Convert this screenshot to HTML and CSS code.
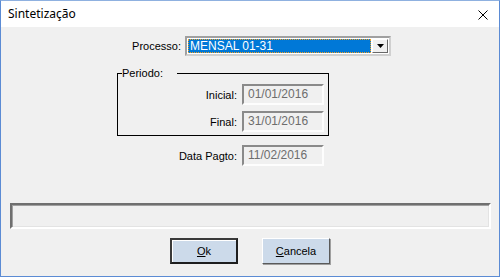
FILE: index.html
```html
<!DOCTYPE html>
<html>
    <head>
        <meta charset="utf-8">
        <title>Sintetização</title>
        <link rel="stylesheet" href="styles.css">
    </head>
    <body>
        <div class="window">
            <div class="titlebar">
                <span class="title">Sintetização</span>
                <svg class="close" width="10" height="10" viewBox="0 0 10 10">
                    <path d="M0.5 0.5 L9.5 9.5 M9.5 0.5 L0.5 9.5" stroke="#000" stroke-width="1" fill="none"/>
                </svg>
            </div>
            <div class="client">
                <div class="row processo">
                    <span class="label lbl-processo">Processo:</span>
                    <div class="combo">
                        <div class="combo-value"><span>MENSAL 01-31</span></div>
                        <div class="combo-btn">
                            <svg width="7" height="4" viewBox="0 0 7 4"><path d="M0 0 H7 L3.5 4 Z" fill="#000"/></svg>
                        </div>
                    </div>
                </div>
                <div class="group">
                    <span class="legend">Periodo:</span>
                    <div class="row">
                        <span class="label lbl-group">Inicial:</span>
                        <div class="field">01/01/2016</div>
                    </div>
                    <div class="row row-final">
                        <span class="label lbl-group">Final:</span>
                        <div class="field">31/01/2016</div>
                    </div>
                </div>
                <div class="row pagto">
                    <span class="label lbl-pagto">Data Pagto:</span>
                    <div class="field">11/02/2016</div>
                </div>
                <div class="status"></div>
                <div class="buttons">
                    <button class="btn btn-default"><u>O</u>k</button>
                    <button class="btn"><u>C</u>ancela</button>
                </div>
            </div>
        </div>
    </body>
</html>
```

FILE: styles.css
```css
html, body {
    margin: 0;
    padding: 0;
    overflow: hidden;
}
body {
    font-family: "Liberation Sans", Arial, sans-serif;
    font-size: 11px;
    color: #000;
}
.window {
    width: 500px;
    height: 277px;
    box-sizing: border-box;
    border: 1px solid #5b8bd4;
    border-top-color: #8fb1e0;
    background: #f0f0f0;
    display: flex;
    flex-direction: column;
}
.titlebar {
    height: 26px;
    background: #fff;
    display: flex;
    align-items: center;
    justify-content: space-between;
    padding: 0 11px 0 7px;
}
.title {
    font-family: "Noto Sans", "Open Sans", sans-serif;
    font-size: 12px;
    margin-top: -1px;
}
.close {
    display: block;
    margin-top: 1px;
}
.client {
    flex: 1;
    display: flex;
    flex-direction: column;
}
.row {
    display: flex;
    align-items: center;
}
.label {
    text-align: right;
    flex: none;
}
.processo {
    margin-top: 9px;
}
.lbl-processo {
    width: 180px;
    margin-right: 4px;
}
.combo {
    width: 206px;
    height: 20px;
    box-sizing: border-box;
    border: 2px solid #a0a0a0;
    border-right-color: #d0d0d0;
    border-bottom-color: #d0d0d0;
    background: #fff;
    display: flex;
    padding: 1px;
}
.combo-value {
    flex: 1;
    background: #0078d7;
    border: 1px dotted #f4a020;
    box-sizing: border-box;
    display: flex;
    align-items: center;
    padding-left: 1px;
    font-size: 12px;
    color: #fff;
}
.combo-btn {
    width: 16px;
    margin-left: 1px;
    box-sizing: border-box;
    background: #f0f0f0;
    border: 1px solid #fff;
    border-right-color: #696969;
    border-bottom-color: #696969;
    display: flex;
    align-items: center;
    justify-content: center;
}
.combo-btn svg {
    display: block;
}
.group {
    position: relative;
    margin: 17px 0 0 116px;
    width: 212px;
    height: 63px;
    box-sizing: border-box;
    border: 1px solid #000;
    padding-top: 10px;
}
.legend {
    position: absolute;
    left: 4px;
    top: -7px;
    background: #f0f0f0;
    padding: 0 14px 0 0;
    line-height: 13px;
}
.lbl-group {
    width: 119px;
    margin-right: 5px;
}
.row-final {
    margin-top: 6px;
}
.field {
    width: 82px;
    height: 21px;
    box-sizing: border-box;
    border: 2px solid #a0a0a0;
    border-top-color: #8a8a8a;
    border-left-color: #8a8a8a;
    border-right-color: #fdfdfd;
    border-bottom-color: #fdfdfd;
    background: #f0f0f0;
    color: #6d6d6d;
    font-size: 12px;
    line-height: 17px;
    padding-left: 4px;
}
.pagto {
    margin-top: 9px;
}
.lbl-pagto {
    width: 236px;
    margin-right: 5px;
}
.status {
    margin: 37px 0 0 9px;
    width: 481px;
    height: 26px;
    box-sizing: border-box;
    border: 2px solid #6f6f6f;
    border-right-color: #fff;
    border-bottom-color: #fff;
    box-shadow: inset 1px 1px 0 #a0a0a0, inset -1px -1px 0 #e3e3e3;
}
.buttons {
    margin-top: 9px;
    display: flex;
    justify-content: center;
    gap: 24px;
}
.btn {
    width: 68px;
    height: 26px;
    margin: 0;
    padding: 0;
    box-sizing: border-box;
    background: #ccdaea;
    border: 1px solid #fff;
    border-right-color: #5a5a5a;
    border-bottom-color: #5a5a5a;
    box-shadow: 1px 1px 0 #a0a0a0;
    font-family: "Liberation Sans", Arial, sans-serif;
    font-size: 11px;
    color: #000;
}
.btn-default {
    border: 2px solid #1e1e1e;
    border-top-color: #3a3a3a;
    border-left-color: #3a3a3a;
    box-shadow: inset 1px 1px 0 #fff;
}
```
